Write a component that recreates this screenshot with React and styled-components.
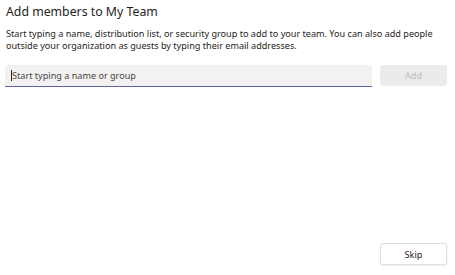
import React from "react";
import styled, { createGlobalStyle } from "styled-components";

const Global = createGlobalStyle`
  html, body { margin: 0; padding: 0; background: #ffffff; }
  * { box-sizing: border-box; }
`;

const Dialog = styled.div`
  width: 455px;
  height: 275px;
  display: flex;
  flex-direction: column;
  padding: 3px 8px 10px 6px;
  font-family: "Noto Sans", "Open Sans", sans-serif;
  color: #252423;
`;

const Title = styled.h1`
  margin: 0;
  font-size: 12.3px;
  font-weight: 400;
  line-height: 18px;
  color: #252423;
`;

const Description = styled.p`
  margin: 7px 0 0 0;
  width: 436px;
  font-size: 9.1px;
  line-height: 12px;
  color: #252423;
`;

const InputRow = styled.div`
  display: flex;
  gap: 8px;
  margin: 13px 0 0 -1px;
  align-items: stretch;
`;

const Field = styled.div`
  flex: 0 0 367px;
  height: 22px;
  background: #f3f2f1;
  border-radius: 2px 2px 0 0;
  border-bottom: 1px solid #6264a7;
  display: flex;
  align-items: center;
  padding-left: 6px;
`;

const Caret = styled.span`
  display: inline-block;
  width: 1px;
  height: 11px;
  background: #252423;
`;

const Placeholder = styled.span`
  font-size: 9.1px;
  color: #484644;
`;

const Button = styled.button`
  width: 67px;
  height: ${(p) => (p.$tall ? "22px" : "21px")};
  border-radius: 3px;
  font-family: "Noto Sans", "Open Sans", sans-serif;
  font-size: 9.1px;
  padding: 0;
  cursor: pointer;
  background: ${(p) => (p.$disabled ? "#ebebeb" : "#ffffff")};
  color: ${(p) => (p.$disabled ? "#bdbdbd" : "#252423")};
  border: 1px solid ${(p) => (p.$disabled ? "#ebebeb" : "#e1dfdd")};
  box-shadow: ${(p) => (p.$disabled ? "none" : "0 1px 2px rgba(0,0,0,0.08)")};
`;

const Spacer = styled.div`
  flex: 1;
`;

const Footer = styled.div`
  display: flex;
  justify-content: flex-end;
`;

export default function App() {
  return (
    <>
      <Global />
      <Dialog>
        <Title>Add members to My Team</Title>
        <Description>
          Start typing a name, distribution list, or security group to add to your team. You can also add people
          outside your organization as guests by typing their email addresses.
        </Description>
        <InputRow>
          <Field>
            <Caret />
            <Placeholder>Start typing a name or group</Placeholder>
          </Field>
          <Button $disabled>Add</Button>
        </InputRow>
        <Spacer />
        <Footer>
          <Button $tall>Skip</Button>
        </Footer>
      </Dialog>
    </>
  );
}
